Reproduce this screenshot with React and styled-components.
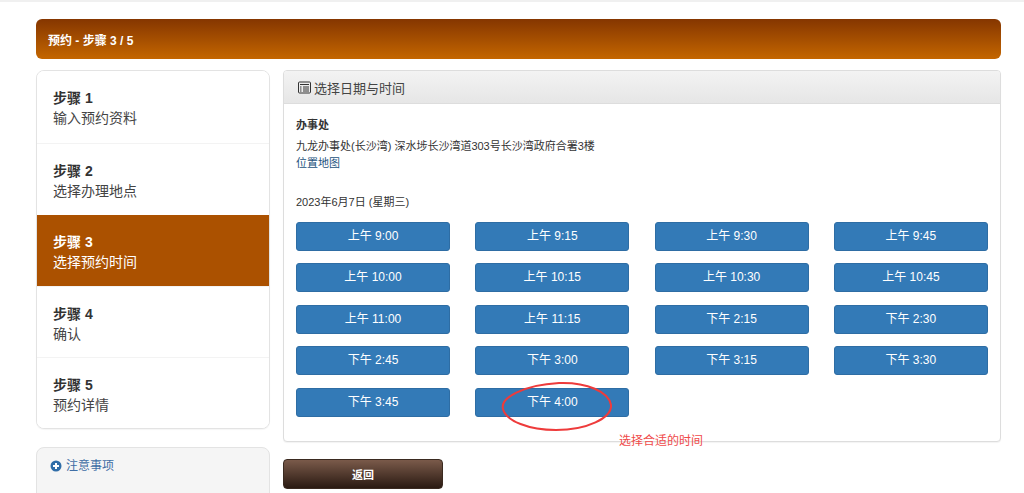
import React from 'react';
import styled, { createGlobalStyle } from 'styled-components';

const GlobalStyle = createGlobalStyle`
  html, body {
    margin: 0;
    padding: 0;
    height: 493px;
    overflow: hidden;
    background: #fff;
    font-family: "Liberation Sans", "Noto Sans CJK SC", sans-serif;
    color: #333;
  }
  * { box-sizing: border-box; }
`;

const Page = styled.div`
  height: 493px;
  overflow: hidden;
  border-top: 2px solid #f0f0f0;
  padding: 17px 23px 0 36px;
`;

const Banner = styled.div`
  height: 40px;
  display: flex;
  align-items: center;
  padding-left: 12px;
  margin-bottom: 11px;
  border-radius: 6px;
  background: linear-gradient(to bottom, #853600, #c46600);
  color: #fff;
  font-size: 12px;
  font-weight: 700;
`;

const Columns = styled.div`
  display: grid;
  grid-template-columns: 234px 718px;
  gap: 13px;
  align-items: start;
`;

const Side = styled.div`
  display: flex;
  flex-direction: column;
  gap: 18px;
`;

const Steps = styled.div`
  background: #fff;
  border: 1px solid #e3e3e3;
  border-radius: 8px;
  overflow: hidden;
  box-shadow: 0 1px 1px rgba(0, 0, 0, 0.04);
`;

const Step = styled.div`
  height: ${(p) => (p.$short ? 71 : 72)}px;
  padding: 17px 16px 0;
  font-size: 14px;
  line-height: 20px;
  color: ${(p) => (p.$active ? '#fff' : '#444')};
  background: ${(p) => (p.$active ? '#ab5100' : '#fff')};
  border-top: ${(p) => (p.$first || p.$active ? 'none' : '1px solid #f3f3f3')};
`;

const StepTitle = styled.div`
  font-weight: 700;
  color: ${(p) => (p.$active ? '#fff' : '#333')};
`;

const Notice = styled.div`
  height: 60px;
  padding: 10px 13px;
  display: flex;
  gap: 4px;
  align-items: flex-start;
  background: #f5f5f5;
  border: 1px solid #e3e3e3;
  border-radius: 8px;
  color: #3f6ea5;
  font-size: 12px;
  line-height: 16px;
`;

const Main = styled.div`
  position: relative;
  display: flex;
  flex-direction: column;
  gap: 17px;
`;

const Panel = styled.div`
  height: 372px;
  background: #fff;
  border: 1px solid #ddd;
  border-radius: 4px;
  box-shadow: 0 1px 1px rgba(0, 0, 0, 0.05);
  overflow: hidden;
`;

const PanelHead = styled.div`
  height: 33px;
  display: flex;
  align-items: center;
  gap: 3px;
  padding-left: 14px;
  background: linear-gradient(to bottom, #f3f3f3, #e6e6e6);
  border-bottom: 1px solid #ddd;
  font-size: 13px;
  color: #444;
`;

const PanelBody = styled.div`
  padding: 13px 12px 0;
  font-size: 11px;
  line-height: 17px;
`;

const Office = styled.div`
  font-weight: 700;
  margin-bottom: 5px;
  line-height: 16px;
`;

const MapLink = styled.a`
  display: block;
  color: #23527c;
  text-decoration: none;
`;

const DateLine = styled.div`
  margin: 22px 0 12px;
  line-height: 16px;
`;

const Slots = styled.div`
  display: grid;
  grid-template-columns: repeat(4, 154px);
  column-gap: 25.3px;
  row-gap: 12.4px;
`;

const Slot = styled.button`
  height: 29px;
  padding: 0;
  border: 1px solid #2e6da4;
  border-radius: 3px;
  background: #337ab7;
  color: #fff;
  font: inherit;
  font-size: 12px;
`;

const BackButton = styled.button`
  width: 160px;
  height: 30px;
  padding: 0;
  border: 1px solid #3a2a20;
  border-radius: 4px;
  background: linear-gradient(to bottom, #7a5a4a, #2a1a12);
  color: #fff;
  font: inherit;
  font-size: 11px;
  font-weight: 700;
`;

const Circle = styled.svg`
  position: absolute;
  left: 216px;
  top: 311px;
`;

const Remark = styled.div`
  position: absolute;
  left: 336px;
  top: 363px;
  font-size: 12px;
  line-height: 16px;
  color: #f04a4a;
`;

const steps = [
  ['步骤 1', '输入预约资料'],
  ['步骤 2', '选择办理地点'],
  ['步骤 3', '选择预约时间'],
  ['步骤 4', '确认'],
  ['步骤 5', '预约详情'],
];

const slots = [
  '上午 9:00', '上午 9:15', '上午 9:30', '上午 9:45',
  '上午 10:00', '上午 10:15', '上午 10:30', '上午 10:45',
  '上午 11:00', '上午 11:15', '下午 2:15', '下午 2:30',
  '下午 2:45', '下午 3:00', '下午 3:15', '下午 3:30',
  '下午 3:45', '下午 4:00',
];

const App = () => {
  return (
    <Page>
      <GlobalStyle />
      <Banner>预约 - 步骤 3 / 5</Banner>
      <Columns>
        <Side>
          <Steps>
            {steps.map(([title, text], i) => (
              <Step key={title} $first={i === 0} $active={i === 2} $short={i > 1}>
                <StepTitle $active={i === 2}>{title}</StepTitle>
                {text}
              </Step>
            ))}
          </Steps>
          <Notice>
            {/* plus sign */}
            <svg width="12" height="12" viewBox="0 0 12 12" style={{ marginTop: 2 }}>
              <circle cx="6" cy="6" r="5.5" fill="#2f6da8" />
              <path d="M6 3v6M3 6h6" stroke="#fff" strokeWidth="2" />
            </svg>
            注意事项
          </Notice>
        </Side>
        <Main>
          <Panel>
            <PanelHead>
              {/* list-alt */}
              <svg width="13" height="13" viewBox="0 0 13 13" fill="none">
                <rect x="0.5" y="1" width="12" height="11" rx="1" stroke="#333" />
                <path d="M2 3.5h9M2 6h1.5M5 6h6M2 8h1.5M5 8h6M2 10h1.5M5 10h6" stroke="#333" />
              </svg>
              选择日期与时间
            </PanelHead>
            <PanelBody>
              <Office>办事处</Office>
              九龙办事处(长沙湾) 深水埗长沙湾道303号长沙湾政府合署3楼
              <MapLink>位置地图</MapLink>
              <DateLine>2023年6月7日 (星期三)</DateLine>
              <Slots>
                {slots.map((s) => (
                  <Slot key={s}>{s}</Slot>
                ))}
              </Slots>
            </PanelBody>
          </Panel>
          <BackButton>返回</BackButton>
          {/* hand drawn mark on the screenshot */}
          <Circle width="114" height="52" viewBox="0 0 114 52" fill="none">
            <path
              d="M4 28C1 17 24 4 60 2c28-1 50 9 52 22 1 13-24 25-55 25C30 49 7 40 4 28z"
              stroke="#ee3b3b"
              strokeWidth="2"
            />
          </Circle>
          <Remark>选择合适的时间</Remark>
        </Main>
      </Columns>
    </Page>
  );
};

export default App;
